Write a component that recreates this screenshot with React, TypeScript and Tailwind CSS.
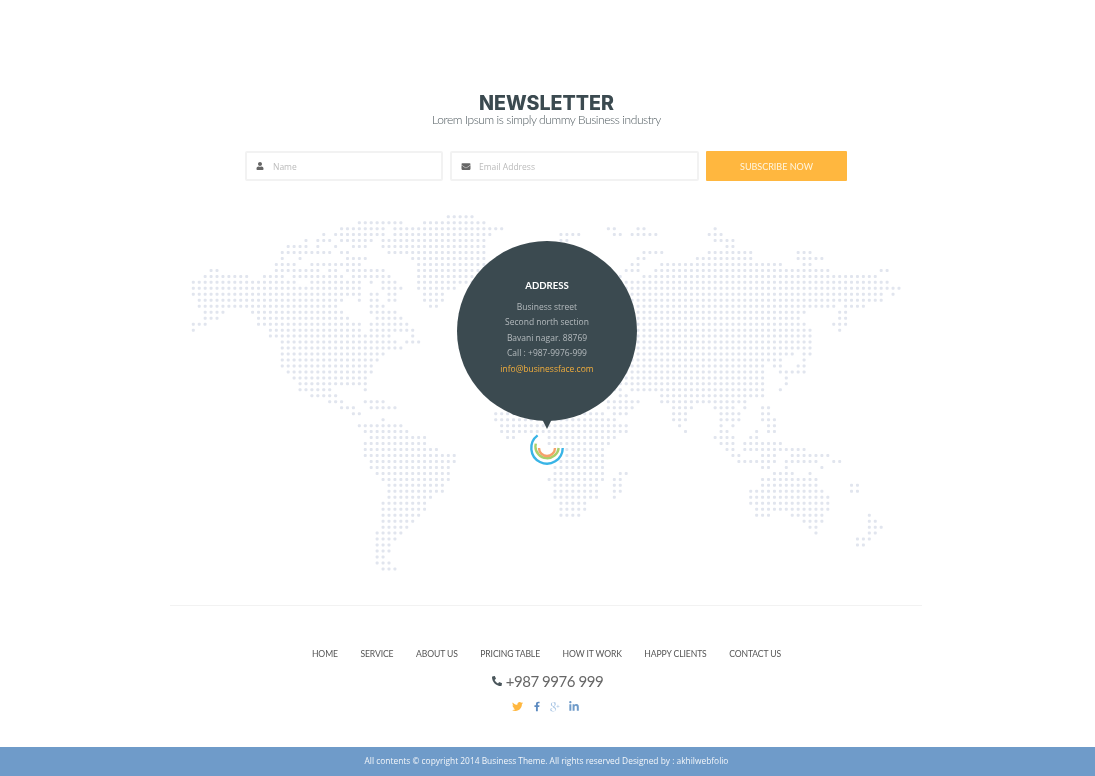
import React from "react";
import { FaUser, FaEnvelope, FaPhoneAlt, FaTwitter, FaFacebookF, FaLinkedinIn } from "react-icons/fa";
import { TiSocialGooglePlus } from "react-icons/ti";

type Run = number | [number, number];
const ROWS: Run[][] = [
  [[43,47]],
  [[28,35],[39,49]],
  [[25,32],[34,52],[70,71],[75,76],88],
  [22,[24,32],[34,50],[62,65],[71,72],[74,78],[87,89]],
  [19,[21,23],[25,30],[32,49],[62,63],[88,91]],
  [[16,19],21,24,[27,29],[32,49],[90,91]],
  [[15,23],[25,26],[33,49],[76,79],[87,94],[102,104]],
  [15,18,[26,29],[37,49],[75,76],[85,94],[102,106]],
  [[14,17],[20,28],[38,49],[74,75],[79,99],[103,104]],
  [[3,4],[14,21],[23,24],[26,32],[38,49],[73,75],[78,107],[116,117]],
  [[2,9],[12,15],[17,25],[27,33],[38,49],72,[76,115]],
  [[0,17],[20,28],30,[32,34],[38,47],[70,117]],
  [[0,28],[32,35],[38,44],[70,119]],
  [[0,28],[30,31],[33,34],[39,42],[70,116],118],
  [[1,25],28,[30,31],[33,34],[39,42],[70,116]],
  [[1,24],[30,32],[40,41],[70,108],[110,113]],
  [[2,5],[10,25],[30,34],[70,103],[109,110]],
  [[2,4],[11,26],[31,35],[70,102],[109,110]],
  [[0,2],[11,28],[30,36],[70,103],[108,110]],
  [0,[13,28],[30,37],[70,104],109],
  [[13,33],37,[70,104]],
  [[15,34],[36,38],[70,104]],
  [[15,35],[70,104]],
  [[15,32],[70,101],[103,104]],
  [[15,31],[70,99],103],
  [[15,30],[70,96],[98,99],[102,103]],
  [[16,30],[70,96],[99,103]],
  [[17,29],[70,96],100],
  [[18,29],[70,96],100],
  [[18,23],29,[70,72],[74,96],99],
  [[20,24],[72,73],[79,96]],
  [[23,25],[29,32],[70,75],[79,93]],
  [[25,27],[30,34],[70,74],[81,84],[88,91],93,[96,97]],
  [[27,28],[51,69],[71,73],[81,83],[89,92],[96,97]],
  [32,[51,71],[81,83],[89,92],[96,98]],
  [[28,35],[52,73],82,89,91,[97,98]],
  [[29,36],[52,73],83,[89,90],95,[97,98]],
  [[30,39],[53,54],[60,71],[88,91],[94,95]],
  [[29,39],[60,70],[89,91],[93,99]],
  [[29,41],[63,69],[90,91],[93,103]],
  [[29,44],[63,69],[91,92],[96,98],[101,107]],
  [[30,44],[62,69],[92,98],[100,105],[108,109]],
  [[30,43],[61,69],[96,97],100,106],
  [[31,43],[61,69],[72,73],[98,101],104],
  [[32,43],[60,69],[71,72],[96,105]],
  [[33,42],[61,68],[71,72],[96,105],[111,112]],
  [[33,42],[61,68],[71,72],[94,106],[111,112]],
  [[33,40],[61,68],71,[94,107]],
  [[32,39],[62,66],[94,107]],
  [[32,39],[62,66],[95,107]],
  [[32,38],[62,65],[95,97],[101,106],114],
  [[32,37],[103,106],[114,115]],
  [[32,36],[104,105],[114,116]],
  [[31,35],105,[114,115]],
  [[31,34],[112,114]],
  [[31,33],[112,113]],
  [[31,33]],
  [[31,32]],
  [[31,33]],
  [[32,34]],
];

const dots: { x: number; y: number }[] = [];
ROWS.forEach((row, r) => {
  row.forEach((run) => {
    const [a, b] = typeof run === "number" ? [run, run] : run;
    for (let c = a; c <= b; c++) dots.push({ x: 193.3 + c * 5.93, y: 6.7 + r * 5.97 });
  });
});

const NAV = ["HOME", "SERVICE", "ABOUT US", "PRICING TABLE", "HOW IT WORK", "HAPPY CLIENTS", "CONTACT US"];

function WorldMap() {
  return (
    <svg width="1095" height="365" viewBox="0 0 1095 365" className="block">
      {dots.map((d, i) => (
        <rect key={i} x={d.x - 1.5} y={d.y - 1.5} width="3" height="3" rx="1" fill="#e1e5ee" />
      ))}
    </svg>
  );
}

function Marker() {
  return (
    <svg width="40" height="40" viewBox="0 0 40 40" className="absolute left-[527px] top-[218px]">
      <g fill="none" strokeWidth="2.4">
        <path d="M35.7 20 A15.7 15.7 0 1 1 10.6 7.4" stroke="#38b4e6" />
        <path d="M31.7 20 A11.7 11.7 0 0 1 8.4 18.4 L8.8 15.6" stroke="#a8d06c" />
        <path d="M28 20 A8 8 0 0 1 12 20" stroke="#f6a16a" />
      </g>
    </svg>
  );
}

export default function App() {
  return (
    <div className="w-[1095px] h-[776px] bg-white overflow-hidden flex flex-col blur-[0.7px] font-['Open_Sans',sans-serif]">
      <div className="pt-[94px] pr-[2px] flex flex-col items-center">
        <h2 className="font-['Inter',sans-serif] font-extrabold text-[19.6px] leading-[18px] text-[#3b4a50]">NEWSLETTER</h2>
        <p className="mt-[1px] font-['Lato',sans-serif] font-light text-[12px] leading-[14px] tracking-[-0.42px] text-[#4f5a5f]">Lorem Ipsum is simply dummy Business industry</p>
      </div>

      <div className="pl-[245px] mt-[24px] flex gap-[7px] h-[30px]">
        <div className="w-[198px] border-2 border-[#f2f2f2] rounded-[2px] flex items-center pl-[9px]">
          <FaUser className="w-[8px] h-[8px] text-[#666]" />
          <span className="ml-[9px] mt-[2px] text-[8.5px] text-[#bbb]">Name</span>
        </div>
        <div className="w-[249px] border-2 border-[#f2f2f2] rounded-[2px] flex items-center pl-[9px]">
          <FaEnvelope className="w-[10px] h-[9px] text-[#666]" />
          <span className="ml-[8px] mt-[2px] text-[8.5px] text-[#bbb]">Email Address</span>
        </div>
        <div className="w-[141px] pt-[1px] bg-[#ffb73f] rounded-[1px] flex items-center justify-center font-['Lato',sans-serif] text-[9px] text-[#fff6e0]">SUBSCRIBE NOW</div>
      </div>

      <div className="relative mt-[29px]">
        <WorldMap />
        <Marker />
        <div className="absolute left-[457px] top-[31px] w-[180px] h-[180px] rounded-full bg-[#3b4a50] flex flex-col items-center pt-[38px]">
          <div className="font-['Lato',sans-serif] font-bold text-[9.6px] leading-[14px] text-white">ADDRESS</div>
          <div className="mt-[6px] flex flex-col items-center text-[8.5px] leading-[15.4px] text-[#b4babd]">
            <span>Business street</span>
            <span>Second north section</span>
            <span>Bavani nagar. 88769</span>
            <span>Call : +987-9976-999</span>
            <span className="text-[#f2ae3c]">info@businessface.com</span>
          </div>
          <div className="absolute left-1/2 -translate-x-1/2 top-[178px] w-0 h-0 border-l-[5px] border-r-[5px] border-t-[10px] border-l-transparent border-r-transparent border-t-[#3b4a50]" />
        </div>
      </div>

      <div className="mx-[170px] mt-[30px] w-[752px] border-t border-[#f2f2f2]" />

      <nav className="mt-[42px] h-[12px] flex justify-center gap-[22.5px] pr-[2px] font-['Lato',sans-serif] text-[8.6px] leading-[12px] text-[#555] tracking-[-0.1px]">
        {NAV.map((n) => (
          <span key={n}>{n}</span>
        ))}
      </nav>

      <div className="mt-[11px] h-[20px] flex items-center justify-center font-['Lato',sans-serif] text-[15px] tracking-[-0.45px] text-[#666]">
        <FaPhoneAlt className="w-[10px] h-[10px] text-[#4a565b] mr-[4px]" />
        <span>+987 9976 999</span>
      </div>

      <div className="mt-[9px] h-[12px] flex items-center pl-[512px]">
        <FaTwitter className="w-[11px] h-[11px] text-[#ffb73f]" />
        <FaFacebookF className="w-[6px] h-[11px] ml-[11px] text-[#5c8ac0]" />
        <TiSocialGooglePlus className="w-[15px] h-[15px] ml-[7px] text-[#a8c5e4]" />
        <FaLinkedinIn className="w-[10px] h-[11px] ml-[7px] text-[#6f9bc9]" />
      </div>

      <footer className="mt-auto h-[29px] bg-[#6f9bc9] flex items-center justify-center pr-[2px] text-[8.4px] text-[#f2f5f9]">
        All contents © copyright 2014 Business Theme. All rights reserved Designed by : akhilwebfolio
      </footer>
    </div>
  );
}
